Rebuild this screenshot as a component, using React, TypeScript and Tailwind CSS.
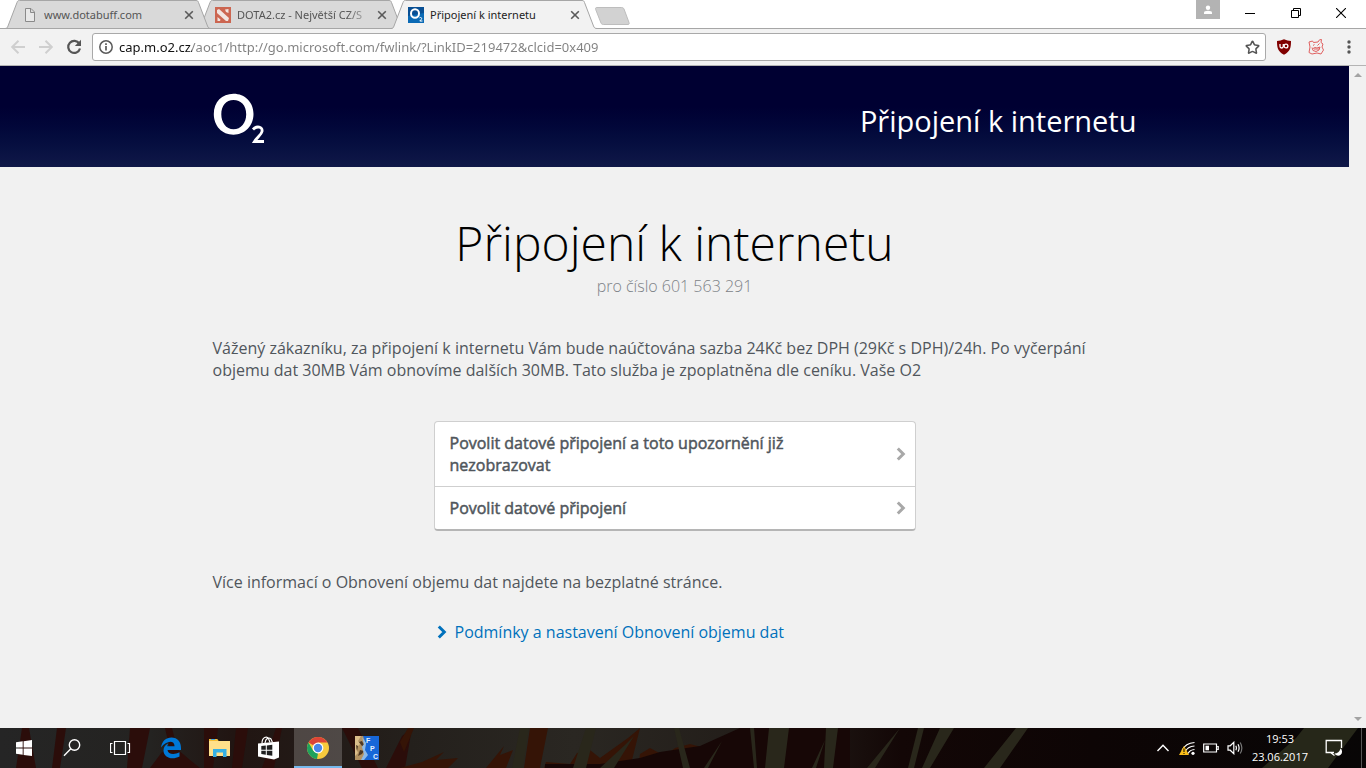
import { useState } from 'react'
import type { ReactNode } from 'react'
import clsx from 'clsx'
import { Star } from 'lucide-react'

const uiFont = "font-['Open_Sans','Noto_Sans',sans-serif]"

interface TabProps {
  title: string
  icon: ReactNode
  active?: boolean
  faded?: boolean
  onSelect: () => void
}

function CloseIcon() {
  return (
    <svg viewBox="0 0 10 10" className="size-[10px]" fill="none" stroke="#5a5a5a" strokeWidth="1.6">
      <path d="M1.2 1.2 8.8 8.8M8.8 1.2 1.2 8.8" />
    </svg>
  )
}

function Tab({ title, icon, active, faded, onSelect }: TabProps) {
  return (
    <div className={clsx('relative flex h-[29px] w-[206px] min-w-0 items-center -mr-[13px]', active ? 'z-20' : faded ? 'z-0' : 'z-10')}>
      <svg viewBox="0 0 206 29" preserveAspectRatio="none" className="absolute inset-0 size-full">
        <path
          d="M0 29C2 28.500 2.500 27.500 3 26L12 2.500C12.500 1 13 .5 14.500 .5H191C192.500 .5 193 1 193.500 2.500L202.500 26C203 27.500 204 28.500 206 29Z"
          fill={active ? '#f2f2f2' : '#d9d9d9'}
        />
        <path
          d="M0 28.500C2 28.500 2.500 27.500 3 26L12 2.500C12.500 1 13 .5 14.500 .5H191C192.500 .5 193 1 193.500 2.500L202.500 26C203 27.500 204 28.500 206 28.500"
          fill="none"
          stroke="#a6a6a6"
        />
        {!active && <path d="M0 28.500H206" stroke="#a6a6a6" />}
      </svg>
      <button onClick={onSelect} className="relative flex h-full min-w-0 flex-1 items-center gap-[6px] pl-[17px] text-left">
        <span className="flex size-4 shrink-0 items-center justify-center">{icon}</span>
        <span
          className={clsx(
            "min-w-0 overflow-hidden font-['Noto_Sans',sans-serif] text-[11px] leading-4 whitespace-nowrap",
            active ? 'text-[#222]' : 'text-[#555]',
            faded && 'mask-[linear-gradient(to_right,black_110px,transparent_138px)]',
          )}
        >
          {title}
        </span>
      </button>
      <button aria-label={`Zavřít ${title}`} className="relative mr-[17px] ml-1 shrink-0">
        <CloseIcon />
      </button>
    </div>
  )
}

function PageIcon() {
  return (
    <svg viewBox="0 0 16 16" className="size-4" fill="#e8e8e8" stroke="#8a8a8a">
      <path d="M3.500 1.500H9L12.500 5V14.500H3.500ZM8.500 1.500V5.500H12.500" />
    </svg>
  )
}

function DotaIcon() {
  return (
    <svg viewBox="0 0 16 16" className="size-4">
      <path d="M0 0H16V16H0Z" fill="#cc6651" />
      <path d="M2 3 4 2 14 11 13 14 11 14 2 6Z M10 2.500 13.500 2 13.500 6 11 5Z M2.500 10 5.500 12.500 5 14 2.500 14Z" fill="#f2e4e0" />
    </svg>
  )
}

function O2Favicon() {
  return (
    <svg viewBox="0 0 16 16" className="size-4">
      <path d="M0 0H16V16H0Z" fill="#0b6ab5" />
      <path d="M0 0H16V6L0 9Z" fill="#084f94" />
      <ellipse cx="7" cy="6.500" rx="4" ry="4.300" fill="none" stroke="#fff" strokeWidth="2" />
      <path d="M11.500 10.800C13 10 14.300 11 13.300 12.300L11.800 14H14.500" fill="none" stroke="#fff" />
    </svg>
  )
}

function WindowControls() {
  return (
    <div className="mr-[2px] ml-auto flex items-start">
      <button aria-label="Profil" className="flex h-[19px] w-6 items-center justify-center bg-[#b3b3b3]">
        <svg viewBox="0 0 10 10" className="size-[10px]" fill="#fff">
          <circle cx="5" cy="2.700" r="2.200" />
          <path d="M1 9V7.500Q1 5.800 5 5.800T9 7.500V9Z" />
        </svg>
      </button>
      <button aria-label="Minimalizovat" className="ml-[7px] flex h-[26px] w-[46px] items-center justify-center">
        <svg viewBox="0 0 10 10" className="size-[10px]" stroke="#000"><path d="M0 5.500H10" /></svg>
      </button>
      <button aria-label="Obnovit" className="flex h-[26px] w-[45px] items-center justify-center">
        <svg viewBox="0 0 10 10" className="size-[10px]" stroke="#000" fill="none"><path d="M.5 2.500H7.500V9.500H.5ZM2.500 2.500V.5H9.500V7.500H7.500" /></svg>
      </button>
      <button aria-label="Zavřít okno" className="flex h-[26px] w-[46px] items-center justify-center">
        <svg viewBox="0 0 10 10" className="size-[10px]" stroke="#000" strokeWidth="1.100"><path d="M0 0 10 10M10 0 0 10" /></svg>
      </button>
    </div>
  )
}

function TabStrip() {
  const [current, setCurrent] = useState(2)
  return (
    <div className="relative flex h-[29px] items-start bg-white pl-[5px]">
      <div className="absolute inset-x-0 bottom-0 h-px bg-[#a6a6a6]" />
      <Tab title="www.dotabuff.com" icon={<PageIcon />} active={current === 0} onSelect={() => setCurrent(0)} />
      <Tab title="DOTA2.cz - Největší CZ/S" icon={<DotaIcon />} active={current === 1} faded onSelect={() => setCurrent(1)} />
      <Tab title="Připojení k internetu" icon={<O2Favicon />} active={current === 2} onSelect={() => setCurrent(2)} />
      <button aria-label="Nová karta" className="mt-[7px] ml-[11px]">
        <svg viewBox="0 0 35 18" className="h-[18px] w-[35px]">
          <path d="M2 .5H26.500C28 .5 28.500 1 29 2L34 15.500C34.500 17 34 17.500 33 17.500H8.500C7 17.500 6.500 17 6 16L.7 2.500C.2 1 .7 .5 2 .5Z" fill="#d2d2d2" stroke="#bdbdbd" />
        </svg>
      </button>
      <WindowControls />
    </div>
  )
}

function Toolbar() {
  return (
    <div className="flex h-[37px] items-center border-b border-[#b4b4b4] bg-[#f2f2f2] pr-3 pl-[10px]">
      <button aria-label="Zpět" className="mr-3">
        <svg viewBox="0 0 16 16" className="size-4" fill="none" stroke="#cfcfcf" strokeWidth="2"><path d="M15 8H2.500M8.500 1.700 2.200 8 8.500 14.300" /></svg>
      </button>
      <button aria-label="Vpřed" className="mr-3">
        <svg viewBox="0 0 16 16" className="size-4" fill="none" stroke="#cfcfcf" strokeWidth="2"><path d="M1 8H13.500M7.500 1.700 13.800 8 7.500 14.300" /></svg>
      </button>
      <button aria-label="Obnovit stránku" className="mr-[10px]">
        <svg viewBox="0 0 16 16" className="size-4">
          <path d="M13.300 4.700A6 6 0 1 0 14 9.500" fill="none" stroke="#555" strokeWidth="2.200" />
          <path d="M15 .8V7H8.800Z" fill="#555" />
        </svg>
      </button>
      <div className="flex h-7 min-w-0 flex-1 items-center rounded-[3px] border border-[#a9a9a9] bg-white px-[5px]">
        <svg viewBox="0 0 14 14" className="ml-px size-[14px] shrink-0" fill="none" stroke="#5a5a5a" strokeWidth="1.500">
          <circle cx="7" cy="7" r="6.200" />
          <path d="M7 6V10.500M7 3.300V4.900" strokeWidth="1.700" />
        </svg>
        {/* hard-stop gradient clipped to the text: dark host, grey path */}
        <input
          aria-label="Adresa"
          defaultValue="cap.m.o2.cz/aoc1/http://go.microsoft.com/fwlink/?LinkID=219472&clcid=0x409"
          className="ml-[6px] h-6 min-w-0 flex-1 bg-[linear-gradient(to_right,#111_73px,#808080_73px)] bg-clip-text font-['Noto_Sans',sans-serif] text-[13px] text-transparent caret-black outline-none"
        />
        <button aria-label="Přidat záložku">
          <Star className="size-[15px] text-[#555]" strokeWidth={2.5} />
        </button>
      </div>
      <button aria-label="uBlock Origin" className="ml-[10px]">
        <svg viewBox="0 0 16 16" className="size-4">
          <path d="M8 .2Q4.500 2 1 2C1 8 1.500 12.500 8 15.800C14.500 12.500 15 8 15 2Q11.500 2 8 .2Z" fill="#800000" />
          <path d="M4 5V7.300Q4 9 5.500 9T7.300 7.300V5" fill="none" stroke="#fff" strokeWidth="1.300" />
          <circle cx="10" cy="7" r="1.900" fill="none" stroke="#fff" strokeWidth="1.300" />
        </svg>
      </button>
      <button aria-label="Rozšíření" className="ml-4">
        <svg viewBox="0 0 16 16" className="size-4" fill="none" stroke="#e06060" strokeWidth="1">
          <path d="M1 3 4.500 2 5.500 3.500 10 3 11.500 .8 13.500 .5 13 3.500 15 5 14 8 15.500 11 13 15 9 14 4 15 1 13.500 2 8Z" />
          <path d="M5 6.500 6.500 5.500M9.500 6.500 11.500 4.500M4 8.500 5 11.500 8 12.500 11 11 12 8 9 9 7 8.500 5 9.500M6 10H11" />
        </svg>
      </button>
      <button aria-label="Nabídka" className="ml-5 px-[3px]">
        <svg viewBox="0 0 4 14" className="h-[14px] w-1" fill="#555">
          <circle cx="2" cy="2" r="1.700" /><circle cx="2" cy="7" r="1.700" /><circle cx="2" cy="12" r="1.700" />
        </svg>
      </button>
    </div>
  )
}

function O2Logo() {
  return (
    <svg viewBox="0 0 52 52" className="size-[52px]" role="img" aria-label="O2">
      <path
        fill="#fff"
        fillRule="evenodd"
        d="M20.500 .8C32 .8 40.500 9.300 40.500 21S32 41.700 20.500 41.700.8 33 .8 21 9 .8 20.500 .8ZM20.500 7C13 7 8.300 13 8.300 21.200S13 36.200 20.500 36.200 33.200 30 33.200 21.200 28 7 20.500 7Z"
      />
      <path d="M40 36.500C43.500 32.500 50 33.500 49 38.500C48.300 41.800 44.500 44 41.500 48.500H51" fill="none" stroke="#fff" strokeWidth="2.800" />
    </svg>
  )
}

function Chevron({ className }: { className?: string }) {
  return (
    <svg viewBox="0 0 10 14" className={clsx('h-[14px] w-[10px] shrink-0', className)} fill="none" stroke="currentColor" strokeWidth="3">
      <path d="M1.800 1.500 7.300 7 1.800 12.500" />
    </svg>
  )
}

function Scrollbar() {
  return (
    <div className="flex w-[17px] shrink-0 flex-col items-center justify-between bg-[#f1f1f1] py-[7px]">
      <svg viewBox="0 0 8 4" className="h-1 w-2" fill="#a3a3a3"><path d="M4 0 8 4H0Z" /></svg>
      <svg viewBox="0 0 8 4" className="h-1 w-2" fill="#a3a3a3"><path d="M0 0H8L4 4Z" /></svg>
    </div>
  )
}

const options = [
  'Povolit datové připojení a toto upozornění již nezobrazovat',
  'Povolit datové připojení',
]

function Portal() {
  return (
    <main className="min-w-0 flex-1 bg-[#f1f1f1] text-[16px] leading-[22px] text-[#50565c]">
      <header className="bg-linear-to-b from-[#000032] from-40% to-[#101848]">
        <div className="mx-auto flex h-[101px] max-w-[924px] items-center justify-between pt-[5px]">
          <O2Logo />
          <span className="pt-1 text-[29px] leading-9 text-white">Připojení k internetu</span>
        </div>
      </header>
      <div className="mx-auto max-w-[924px]">
        <h1 className="pt-11 text-center text-[48px] leading-[64px] font-light text-black">Připojení k internetu</h1>
        <p className="text-center font-light text-[#7d8287]">pro číslo 601 563 291</p>
        <p className="mt-10">
          Vážený zákazníku, za připojení k internetu Vám bude naúčtována sazba 24Kč bez DPH (29Kč s DPH)/24h. Po vyčerpání
          objemu dat 30MB Vám obnovíme dalších 30MB. Tato služba je zpoplatněna dle ceníku. Vaše O2
        </p>
        <ul className="mx-auto mt-10 max-w-[482px] divide-y divide-[#cfcfcf] rounded-[4px] border border-b-2 border-[#cfcfcf] border-b-[#b5b5b5] bg-white">
          {options.map(label => (
            <li key={label}>
              <button className="flex w-full items-center justify-between py-[10px] pr-[9px] pl-[15px] text-left">
                <span className="max-w-[360px] [-webkit-text-stroke:0.5px_#50565c]">{label}</span>
                <Chevron className="text-[#a8a8a8]" />
              </button>
            </li>
          ))}
        </ul>
        <p className="mt-10">Více informací o Obnovení objemu dat najdete na bezplatné stránce.</p>
        <div className="mx-auto mt-7 max-w-[482px] pl-[3px]">
          <a href="#podminky" className="inline-flex items-center gap-2 text-[#0071bc]">
            <Chevron />
            Podmínky a nastavení Obnovení objemu dat
          </a>
        </div>
      </div>
    </main>
  )
}

// Dimmed wallpaper showing through the translucent taskbar
function TaskbarBackdrop() {
  return (
    <svg viewBox="0 0 1366 40" preserveAspectRatio="none" className="absolute inset-0 size-full">
      <defs>
        <linearGradient id="dusk">
          <stop offset="0" stopColor="#252525" />
          <stop offset=".11" stopColor="#242321" />
          <stop offset=".17" stopColor="#211512" />
          <stop offset=".3" stopColor="#24201c" />
          <stop offset=".42" stopColor="#2a2722" />
          <stop offset=".58" stopColor="#211b17" />
          <stop offset=".66" stopColor="#130706" />
          <stop offset=".8" stopColor="#0d0505" />
          <stop offset="1" stopColor="#080606" />
        </linearGradient>
      </defs>
      <path d="M0 0H1366V40H0Z" fill="url(#dusk)" />
      <path
        fill="#2b0d0a"
        d="M22 0H29L36 40H16ZM57 0H66L60 40H52ZM130 0H150L142 40H127ZM150 40 162 24 176 20 190 32 200 40ZM165 0H172L182 40H174ZM204 0H218L213 40H204ZM236 0 248 0 242 40H232ZM262 40 272 12 276 0H282L274 40ZM342 0H358L378 40H362ZM386 40 402 8 412 0 405 40Z"
      />
      <path
        fill="#351406"
        d="M400 14 408 0H414L404 24ZM422 34 444 24 436 32 458 30 448 40H400ZM486 40 504 18 500 27 513 22 506 40ZM524 40 530 0H548L540 40ZM546 34 570 36 577 25 590 22 600 30 628 10 640 0 630 40H544ZM640 26 650 20 665 28 675 20 690 16 705 20 730 12 745 0V40H638Z"
      />
      <path fill="#170706" d="M545 36H600L640 30 660 24 700 18 740 0H850V40H545Z" />
      <path
        fill="#29271b"
        d="M512 40 520 0H529L523 40ZM573 40 586 0H596L586 40ZM600 40 626 16 634 8 614 40ZM674 0H679L690 40H683ZM704 40 722 13 708 40ZM750 0H754L757 40H754ZM769 0H789L784 40H765ZM812 40 825 12 816 40ZM826 0H838L833 40H824ZM867 40 900 0 875 40ZM908 40 918 0H924L914 40ZM922 40 940 0H954L930 40ZM984 40 1016 0H1028L1000 40Z"
      />
      <path fill="#262719" d="M1262 40 1296 10 1304 0H1358L1328 40Z" />
    </svg>
  )
}

const taskbarApps: { label: string; art: ReactNode; active?: boolean }[] = [
  {
    label: 'Start',
    art: <path d="M4 6.300 10.700 5.300V11.600H4ZM11.600 5.200 20 4V11.600H11.600ZM4 12.500H10.700V18.800L4 17.800ZM11.600 12.500H20V20L11.600 18.900Z" fill="#fff" />,
  },
  {
    label: 'Hledat',
    art: (
      <g fill="none" stroke="#fff" strokeWidth="1.400">
        <circle cx="13.500" cy="9" r="5.200" />
        <path d="M9.800 12.800 3 19.800" />
      </g>
    ),
  },
  {
    label: 'Zobrazení úkolů',
    art: <path d="M4.500 5.500H15.500V18.500H4.500ZM2.500 7.500H.5V16.500H2.500M17.500 7.500H19.500V16.500H17.500" fill="none" stroke="#fff" strokeWidth="1.200" />,
  },
  {
    label: 'Microsoft Edge',
    art: (
      <path
        fill="#0078d7"
        d="M2 11.500C3 5 7 1.500 12.500 1.500C18.500 1.500 22 6 22 12V14H8.500C8.800 18.200 15 19.200 20.500 16.300V20.500C13 24.500 4.500 21.500 4.500 14.500C4.500 11 6.500 8.500 9.500 7.200C8.700 8.200 8.400 9 8.300 10.300H15.500C15.700 3.500 7 4.500 2 11.500Z"
      />
    ),
  },
  {
    label: 'Průzkumník souborů',
    art: (
      <g>
        <path d="M1 3H9L10.500 5H22V20H1Z" fill="#ffe08a" />
        <path d="M1 3H9L10.500 5H1Z" fill="#f5bd32" />
        <path d="M3 3.500H7" stroke="#4ba8dc" />
        <path d="M5 21V13H18.500V21H15V16.500H8.500V21Z" fill="#35b0e4" />
      </g>
    ),
  },
  {
    label: 'Obchod',
    art: (
      <g>
        <path d="M1 7.500 22 5.500V21.500L17 23.500 1 20.500Z" fill="#fff" />
        <path d="M5 7.500C5 .5 10 .2 11.500 2.500L13 6.500M8 7C8.500 2 12 1 14 3L15.500 6.500" fill="none" stroke="#fff" strokeWidth="1.200" />
        <path d="M4.300 10 8.800 9.500V13.700H4.300ZM9.800 9.400 15.300 8.700V13.700H9.800ZM4.300 14.700H8.800V18.700L4.300 18ZM9.800 14.700H15.300V19.700L9.800 18.900Z" fill="#202020" />
      </g>
    ),
  },
  {
    label: 'Google Chrome',
    active: true,
    art: (
      <g>
        <circle cx="12" cy="12" r="11" fill="#f7ca3d" />
        <path d="M12 12 2.500 6.500A11 11 0 0 1 21.500 6.500H12Z" fill="#dc4437" />
        <path d="M2.500 6.500 7.200 14.700 12 17.500 11 23A11 11 0 0 1 2.500 6.500Z" fill="#1fa15d" />
        <circle cx="12" cy="12" r="5.400" fill="#fff" />
        <circle cx="12" cy="12" r="4.200" fill="#4a86e8" />
      </g>
    ),
  },
  {
    label: 'FPC',
    art: (
      <g>
        <path d="M0 0H24V24H0Z" fill="#1767d8" />
        <path d="M0 0H8L11 8 9 14 12 18 8 24H0Z" fill="#b39262" />
        <path d="M0 0H6L3 5 5 8 1 12 3 17 0 20Z" fill="#dbbd8a" />
        <path d="M4 6 7 5 9 9 7 10ZM5 14 9 15 7 18 3 20ZM1 9 3 10 2 15Z" fill="#4d3824" />
        <path d="M7 1 11 7 10 14 13 19 9 24H6L9 18 7 11 9 8Z" fill="#8cbae8" />
        <g fill="#e6f1ff" fontFamily="Liberation Sans, sans-serif" fontSize="7" fontWeight="bold">
          <text x="11" y="7">F</text>
          <text x="15" y="15">P</text>
          <text x="18" y="23">C</text>
        </g>
      </g>
    ),
  },
]

function Tray() {
  return (
    <div className="relative ml-auto flex items-center text-white">
      <button aria-label="Skryté ikony" className="mr-[9px]">
        <svg viewBox="0 0 14 14" className="size-[14px]" fill="none" stroke="#fff" strokeWidth="1.400"><path d="M1.500 10 7 4.300 12.500 10" /></svg>
      </button>
      <button aria-label="Síť" className="mr-2">
        <svg viewBox="0 0 16 16" className="size-4">
          <path d="M3 10.500Q6.500 3 15.500 2.500M6 12Q8.500 6.500 15.500 6M9 13.500Q11 9.800 15.500 9.500" fill="none" stroke="#fff" strokeWidth="1.200" />
          <circle cx="14" cy="13.300" r="1.600" fill="#fff" />
          <path d="M5 6 10 15H0Z" fill="#f8bd1a" />
          <path d="M5 8.500V12M5 13V14" stroke="#000" />
        </svg>
      </button>
      <button aria-label="Baterie" className="mr-2">
        <svg viewBox="0 0 16 10" className="h-[10px] w-4">
          <path d="M.7 1H13.500V9H.7ZM14.200 3.500H15.200V6.500H14.200" fill="none" stroke="#fff" strokeWidth="1.200" />
          <path d="M2.500 2.700H6V7.300H2.500Z" fill="#fff" />
        </svg>
      </button>
      <button aria-label="Hlasitost" className="mr-2">
        <svg viewBox="0 0 17 14" className="h-[14px] w-[17px]" fill="none" stroke="#fff" strokeWidth="1.200">
          <path d="M1 4.800H3.200L6.800 1.300V12.700L3.200 9.200H1ZM8.800 4.800Q10 7 8.800 9.200M11 3.200Q13.200 7 11 10.800" />
          <path d="M13.200 1.500Q16.500 7 13.200 12.500" stroke="#777" />
        </svg>
      </button>
      <div className="text-center text-[11px] leading-[18px]">
        <div>19:53</div>
        <div>23.06.2017</div>
      </div>
      <button aria-label="Centrum akcí" className="mr-[18px] ml-[17px]">
        <svg viewBox="0 0 18 18" className="size-[18px]">
          <path d="M9 13.500H6.500L6.500 13.500H1.200V1.500H16.500V9M5.500 13.500 9.500 16.500" fill="none" stroke="#fff" strokeWidth="1.300" />
          <path d="M15.500 9.500A4 4 0 1 1 9.500 14.500Q14 14.500 15.500 9.500Z" fill="#fff" />
        </svg>
      </button>
    </div>
  )
}

function Taskbar() {
  return (
    <footer className="relative flex h-10 shrink-0 items-stretch overflow-hidden">
      <TaskbarBackdrop />
      <nav className="relative flex gap-px">
        {taskbarApps.map(app => (
          <button
            key={app.label}
            aria-label={app.label}
            className={clsx(
              'flex w-12 items-center justify-center border-b-2',
              app.active ? 'border-[#76b9ed] bg-white/20' : 'border-transparent',
            )}
          >
            <svg viewBox="0 0 24 24" className="mt-[2px] size-6">{app.art}</svg>
          </button>
        ))}
      </nav>
      <Tray />
      <div className="relative w-[5px] border-l border-[#555]" />
    </footer>
  )
}

export default function App() {
  return (
    <div className={clsx('flex min-h-screen flex-col', uiFont)}>
      <TabStrip />
      <Toolbar />
      <div className="flex flex-1">
        <Portal />
        <Scrollbar />
      </div>
      <Taskbar />
    </div>
  )
}
